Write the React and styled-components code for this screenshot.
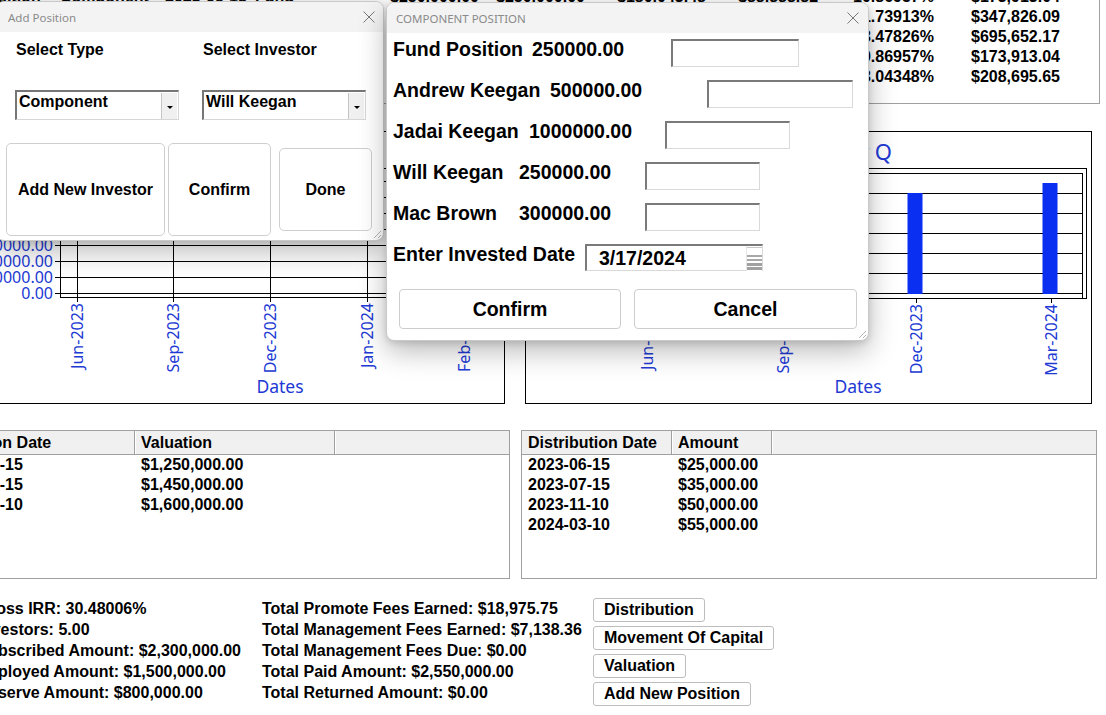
import React from 'react';
import styled, { createGlobalStyle } from 'styled-components';

const UI_FONT = `"Liberation Sans", Arial, sans-serif`;
const SEGOE = `"Noto Sans", "Open Sans", sans-serif`;
const BLUE = '#2139d4';

const GlobalStyle = createGlobalStyle`
  html, body { margin: 0; padding: 0; background: #fff; }
  body { overflow: hidden; font-family: ${UI_FONT}; color: #000; }
  * { box-sizing: border-box; }
`;

const Screen = styled.div`
  position: relative; width: 1106px; height: 715px; overflow: hidden; background: #fff;
`;

const Main = styled.div`
  margin-left: -66px; width: 1166px;
  display: flex; flex-direction: column;
  font: bold 16px ${UI_FONT};
`;

/* ---------- investors list at the top ---------- */
const TopTable = styled.div`
  margin-top: -13px; height: 117px; width: 1166px;
  border-right: 1px solid #a0a0a0; border-bottom: 1px solid #a0a0a0;
`;

const TopRow = styled.div`
  display: grid;
  grid-template-columns: 126px 105px 90px 135px 106px 121px 121px 115px 118px 1fr;
  height: 20px; line-height: 20px; white-space: nowrap;
`;

const Cell = styled.div`
  overflow: hidden; padding-left: ${p => p.$pad || 0}px;
`;

/* ---------- charts ---------- */
const ChartsRow = styled.div`
  display: flex; gap: 20px; margin-top: 27px;
`;

const ChartPanel = styled.div`
  width: ${p => p.$w}px; height: 273px;
  border: 1px solid #000; background: #fff;
  svg { display: block; font-weight: normal; }
`;

/* ---------- list views ---------- */
const TablesRow = styled.div`
  display: flex; gap: 11px; margin-top: 26px;
`;

const ListView = styled.div`
  width: 576px; height: 149px; border: 1px solid #a0a0a0; background: #fff; overflow: hidden;
`;

const HeaderRow = styled.div`
  display: grid; grid-template-columns: ${p => p.$cols};
  height: 24px; background: #f0f0f0; border-bottom: 1px solid #a0a0a0;
`;

const HeaderCell = styled.div`
  line-height: 23px; padding-left: 6px; white-space: nowrap; overflow: hidden;
  border-right: 1px solid #a0a0a0;
  & + & { border-left: 1px solid #fff; padding-left: 5px; }
  &:last-child { border-right: none; }
`;

const BodyRow = styled.div`
  display: grid; grid-template-columns: ${p => p.$cols};
  height: 20px; line-height: 20px; white-space: nowrap;
`;

/* ---------- stats + buttons ---------- */
const StatsRow = styled.div`
  display: flex; margin-top: 19px; padding-left: 2px;
`;

const StatsCol = styled.div`
  width: ${p => p.$w}px; display: flex; flex-direction: column; white-space: nowrap;
`;

const StatLine = styled.div`
  height: 21px; line-height: 21px;
`;

const ButtonsCol = styled.div`
  display: flex; flex-direction: column; align-items: flex-start; gap: 4px;
`;

const SmallButton = styled.button`
  height: 24px; padding: 0 10px; border: 1px solid #bdbdbd; border-radius: 3px;
  background: #fff; font: bold 16px ${UI_FONT}; line-height: 22px; color: #000;
`;

/* ---------- dialogs ---------- */
const Dialog = styled.div`
  position: absolute; left: ${p => p.$x}px; top: ${p => p.$y}px;
  width: ${p => p.$w}px; height: ${p => p.$h}px;
  background: #fff; border: 1px solid #c9c9c9; border-radius: 8px; overflow: hidden;
  box-shadow: 0 10px 28px rgba(0, 0, 0, 0.28), 0 2px 6px rgba(0, 0, 0, 0.12);
  display: flex; flex-direction: column;
`;

const TitleBar = styled.div`
  height: ${p => p.$h}px; flex: none; background: #f3f3f3;
  display: flex; align-items: center; justify-content: space-between;
  padding: 0 ${p => p.$right}px 0 ${p => p.$left}px;
  font: 11.5px ${SEGOE}; color: #8a8a8a;
`;

const Grip = styled.svg`
  position: absolute; right: 1px; bottom: 1px;
`;

const AddBody = styled.div`
  padding: 9px 0 0 9px; display: flex; flex-direction: column;
`;

const FieldsRow = styled.div`
  display: flex; gap: 23px; margin-left: 9px;
`;

const Field = styled.div`
  display: flex; flex-direction: column; gap: 29px;
`;

const FieldLabel = styled.div`
  height: 20px; line-height: 20px; padding-left: 1px; font: bold 16px ${UI_FONT};
`;

const Combo = styled.div`
  width: 164px; height: 30px; background: #fff;
  border-style: solid; border-width: 2px 1px 1px 2px;
  border-color: #767676 #d6d6d6 #d6d6d6 #767676;
  padding-left: 2px; display: flex; align-items: flex-start;
  font: bold 16px ${UI_FONT}; line-height: 20px;
`;

const ComboText = styled.span`
  flex: 1;
`;

const ComboButton = styled.span`
  width: 16px; height: 26px; margin: 1px 1px 0 0; background: #f0f0f0;
  border-left: 1px solid #c4c4c4;
  display: flex; align-items: center; justify-content: center;
  &::after {
    content: ''; margin-top: 3px;
    border-left: 3px solid transparent; border-right: 3px solid transparent; border-top: 3px solid #000;
  }
`;

const BigButtonsRow = styled.div`
  display: flex; align-items: center; margin-top: 23px;
`;

const BigButton = styled.button`
  width: ${p => p.$w}px; height: ${p => p.$h}px; margin-left: ${p => p.$gap || 0}px;
  border: 1px solid #cfcfcf; border-radius: 5px; background: #fff;
  font: bold 16px ${UI_FONT}; color: #000; padding: 0;
`;

const PosBody = styled.div`
  padding: 4px 0 0 6px; display: flex; flex-direction: column;
  font: bold 19.5px ${UI_FONT};
`;

const PosRow = styled.div`
  display: flex; align-items: flex-start; height: 41px; line-height: 24px; white-space: nowrap;
`;

const PosText = styled.div`
  width: ${p => p.$w}px; flex: none;
`;

const Entry = styled.div`
  width: ${p => p.$w}px; height: ${p => p.$h || 28}px; margin-top: 2px; flex: none; background: #fff;
  border-style: solid; border-width: 2px 1px 1px 2px;
  border-color: #7a7a7a #d9d9d9 #d9d9d9 #7a7a7a;
  display: flex; align-items: center;
`;

const DateText = styled.span`
  flex: 1; padding-left: 12px; line-height: 24px;
`;

const PosButtons = styled.div`
  display: flex; gap: 13px; margin-top: 6px; padding-left: 6px;
`;

const PosButton = styled.button`
  width: ${p => p.$w}px; height: 40px; border: 1px solid #cdcdcd; border-radius: 4px;
  background: #fff; font: bold 19.5px ${UI_FONT}; color: #000; padding: 0;
`;

/* ---------- data ---------- */
const topRows = [
  ['Fund Position', 'Component', '2023-06-15', 'Fund', '$250,000.00', '$250,000.00', '$180,043.48', '$88,888.82', '10.86957%', '$173,913.04'],
  ['Andrew Keegan', 'Investor', '2023-06-15', 'Class A', '$500,000.00', '$500,000.00', '$360,086.96', '$177,777.64', '21.73913%', '$347,826.09'],
  ['Jadai Keegan', 'Investor', '2023-06-15', 'Class A', '$1,000,000.00', '$1,000,000.00', '$720,173.91', '$355,555.28', '43.47826%', '$695,652.17'],
  ['Will Keegan', 'Investor', '2023-06-15', 'Class A', '$250,000.00', '$250,000.00', '$180,043.48', '$88,888.82', '10.86957%', '$173,913.04'],
  ['Mac Brown', 'Investor', '2023-06-15', 'Class A', '$300,000.00', '$300,000.00', '$216,052.17', '$106,666.58', '13.04348%', '$208,695.65'],
];

const valuations = [
  ['2023-06-15', '$1,250,000.00'],
  ['2023-09-15', '$1,450,000.00'],
  ['2024-01-10', '$1,600,000.00'],
];

const distributions = [
  ['2023-06-15', '$25,000.00'],
  ['2023-07-15', '$35,000.00'],
  ['2023-11-10', '$50,000.00'],
  ['2024-03-10', '$55,000.00'],
];

const statsLeft = [
  'Total Gross IRR: 30.48006%',
  'Total Investors: 5.00',
  'Total Subscribed Amount: $2,300,000.00',
  'Total Deployed Amount: $1,500,000.00',
  'Total Reserve Amount: $800,000.00',
];

const statsRight = [
  'Total Promote Fees Earned: $18,975.75',
  'Total Management Fees Earned: $7,138.36',
  'Total Management Fees Due: $0.00',
  'Total Paid Amount: $2,550,000.00',
  'Total Returned Amount: $0.00',
];

const positions = [
  { name: 'Fund Position', value: '250000.00', valueX: 531, inputX: 670, inputW: 128 },
  { name: 'Andrew Keegan', value: '500000.00', valueX: 549, inputX: 706, inputW: 146 },
  { name: 'Jadai Keegan', value: '1000000.00', valueX: 528, inputX: 664, inputW: 125 },
  { name: 'Will Keegan', value: '250000.00', valueX: 518, inputX: 644, inputW: 115 },
  { name: 'Mac Brown', value: '300000.00', valueX: 518, inputX: 644, inputW: 115 },
];

/* ---------- drawings ---------- */
const CloseIcon = () => (
  <svg width="12" height="12" viewBox="0 0 12 12">
    <path d="M0.5 0.5 L11.5 11.5 M11.5 0.5 L0.5 11.5" stroke="#777" strokeWidth="1" fill="none" />
  </svg>
);

const ResizeGrip = () => (
  <Grip width="11" height="11" viewBox="0 0 11 11">
    <path d="M10 3 L3 10 M10 7 L7 10" stroke="#b5b5b5" strokeWidth="1" fill="none" />
  </Grip>
);

const SpinIcon = () => (
  <svg width="16" height="25" viewBox="0 0 16 25" style={{ display: 'block' }}>
    <rect x="0" y="0" width="16" height="25" fill="#fff" />
    <line x1="0" y1="0" x2="0" y2="25" stroke="#d0d0d0" />
    <rect x="1" y="1" width="15" height="1" fill="#c8c8c8" />
    <rect x="1" y="9" width="15" height="2" fill="#a8a8a8" />
    <rect x="1" y="13" width="15" height="2" fill="#a8a8a8" />
    <rect x="1" y="17" width="15" height="3" fill="#a0a0a0" />
    <rect x="1" y="21" width="15" height="3" fill="#a0a0a0" />
  </svg>
);

const AxisLabel = ({ x, y, children }) => (
  <text transform={`translate(${x + 6}, ${y}) rotate(-90)`} textAnchor="end"
    fontFamily={SEGOE} fontSize="16" fontWeight="normal" fill={BLUE}>{children}</text>
);

const leftTicks = [
  { x: 77, label: 'Jun-2023' }, { x: 173, label: 'Sep-2023' }, { x: 270, label: 'Dec-2023' },
  { x: 367, label: 'Jan-2024' }, { x: 464, label: 'Feb-2024' },
];
const leftGrid = [
  { y: 293, label: '0.00' }, { y: 277, label: '200000.00' }, { y: 261, label: '400000.00' },
  { y: 245, label: '600000.00' }, { y: 229, label: '800000.00' }, { y: 213, label: '1000000.00' },
  { y: 197, label: '1200000.00' }, { y: 181, label: '1400000.00' },
];

const LeftChart = () => (
  <ChartPanel $w={571}>
    <svg width="569" height="271" viewBox="-65 132 569 271">
      <text x="215" y="160" textAnchor="middle" fontFamily={SEGOE} fontSize="22" fill={BLUE}>Valuation by Q</text>
      <rect x="60.5" y="168.5" width="432" height="129" fill="none" stroke="#000" />
      {leftGrid.map(g => (
        <g key={g.y}>
          <line x1="55" y1={g.y + 0.5} x2="492" y2={g.y + 0.5} stroke="#000" />
          <text x="53" y={g.y + 6} textAnchor="end" fontFamily={SEGOE} fontSize="16" fill={BLUE}>{g.label}</text>
        </g>
      ))}
      {leftTicks.map(t => (
        <g key={t.x}>
          <line x1={t.x + 0.5} y1="168" x2={t.x + 0.5} y2="302" stroke="#000" />
          <AxisLabel x={t.x} y={303}>{t.label}</AxisLabel>
        </g>
      ))}
      <text x="280" y="393" textAnchor="middle" fontFamily={SEGOE} fontSize="17.5" fill={BLUE}>Dates</text>
    </svg>
  </ChartPanel>
);

const rightTicks = [
  { x: 647, label: 'Jun-2023' }, { x: 783, label: 'Sep-2023' },
  { x: 916, label: 'Dec-2023', bar: 193 }, { x: 1051, label: 'Mar-2024', bar: 183 },
];

const RightChart = () => (
  <ChartPanel $w={567}>
    <svg width="565" height="271" viewBox="526 132 565 271">
      <text x="892" y="160" textAnchor="end" fontFamily={SEGOE} fontSize="22" fill={BLUE}>Distribution by Q</text>
      <rect x="585.5" y="168.5" width="501" height="130" fill="none" stroke="#000" />
      <line x1="585" y1="173.5" x2="1082" y2="173.5" stroke="#000" />
      <line x1="1082.5" y1="173" x2="1082.5" y2="298" stroke="#000" />
      {[193, 213, 233, 253, 273, 293].map((y, i) => (
        <g key={y}>
          <line x1="580" y1={y + 0.5} x2="1082" y2={y + 0.5} stroke="#000" />
          <text x="578" y={y + 6} textAnchor="end" fontFamily={SEGOE} fontSize="16" fill={BLUE}>
            {(10000 * (5 - i)).toFixed(2)}
          </text>
        </g>
      ))}
      {rightTicks.map(t => (
        <g key={t.x}>
          {t.bar && <rect x={t.x - 8.5} y={t.bar} width="15" height={294 - t.bar} fill="#0a2ff0" />}
          <line x1={t.x + 0.5} y1="298" x2={t.x + 0.5} y2="303" stroke="#000" />
          <AxisLabel x={t.x} y={304}>{t.label}</AxisLabel>
        </g>
      ))}
      <text x="858" y="393" textAnchor="middle" fontFamily={SEGOE} fontSize="17.5" fill={BLUE}>Dates</text>
    </svg>
  </ChartPanel>
);

/* ---------- page ---------- */
const LEFT_COLS = '200px 200px 1fr';
const RIGHT_COLS = '150px 100px 1fr';

const App = () => (
  <Screen>
    <GlobalStyle />
    <Main>
      <TopTable>
        {topRows.map((row, i) => (
          <TopRow key={i}>
            {row.map((c, j) => <Cell key={j}>{c}</Cell>)}
          </TopRow>
        ))}
      </TopTable>

      <ChartsRow>
        <LeftChart />
        <RightChart />
      </ChartsRow>

      <TablesRow>
        <ListView>
          <HeaderRow $cols={LEFT_COLS}>
            <HeaderCell>Valuation Date</HeaderCell>
            <HeaderCell>Valuation</HeaderCell>
            <HeaderCell />
          </HeaderRow>
          {valuations.map(r => (
            <BodyRow key={r[0]} $cols={LEFT_COLS}>
              <Cell $pad={6}>{r[0]}</Cell>
              <Cell $pad={6}>{r[1]}</Cell>
            </BodyRow>
          ))}
        </ListView>
        <ListView>
          <HeaderRow $cols={RIGHT_COLS}>
            <HeaderCell>Distribution Date</HeaderCell>
            <HeaderCell>Amount</HeaderCell>
            <HeaderCell />
          </HeaderRow>
          {distributions.map(r => (
            <BodyRow key={r[0]} $cols={RIGHT_COLS}>
              <Cell $pad={6}>{r[0]}</Cell>
              <Cell $pad={6}>{r[1]}</Cell>
            </BodyRow>
          ))}
        </ListView>
      </TablesRow>

      <StatsRow>
        <StatsCol $w={326}>
          {statsLeft.map(s => <StatLine key={s}>{s}</StatLine>)}
        </StatsCol>
        <StatsCol $w={331}>
          {statsRight.map(s => <StatLine key={s}>{s}</StatLine>)}
        </StatsCol>
        <ButtonsCol>
          <SmallButton>Distribution</SmallButton>
          <SmallButton>Movement Of Capital</SmallButton>
          <SmallButton>Valuation</SmallButton>
          <SmallButton>Add New Position</SmallButton>
        </ButtonsCol>
      </StatsRow>
    </Main>

    <Dialog $x={-4} $y={1} $w={388} $h={240}>
      <TitleBar $h={30} $left={11} $right={8}>
        <span>Add Position</span>
        <CloseIcon />
      </TitleBar>
      <AddBody>
        <FieldsRow>
          <Field>
            <FieldLabel>Select Type</FieldLabel>
            <Combo><ComboText>Component</ComboText><ComboButton /></Combo>
          </Field>
          <Field>
            <FieldLabel>Select Investor</FieldLabel>
            <Combo><ComboText>Will Keegan</ComboText><ComboButton /></Combo>
          </Field>
        </FieldsRow>
        <BigButtonsRow>
          <BigButton $w={159} $h={93}>Add New Investor</BigButton>
          <BigButton $w={103} $h={93} $gap={3}>Confirm</BigButton>
          <BigButton $w={93} $h={83} $gap={8}>Done</BigButton>
        </BigButtonsRow>
      </AddBody>
      <ResizeGrip />
    </Dialog>

    <Dialog $x={386} $y={2} $w={483} $h={339}>
      <TitleBar $h={30} $left={9} $right={9}>
        <span>COMPONENT POSITION</span>
        <CloseIcon />
      </TitleBar>
      <PosBody>
        {positions.map(p => (
          <PosRow key={p.name}>
            <PosText $w={p.valueX - 392}>{p.name}</PosText>
            <PosText $w={p.inputX - p.valueX}>{p.value}</PosText>
            <Entry $w={p.inputW} />
          </PosRow>
        ))}
        <PosRow>
          <PosText $w={192}>Enter Invested Date</PosText>
          <Entry $w={178} $h={27}>
            <DateText>3/17/2024</DateText>
            <SpinIcon />
          </Entry>
        </PosRow>
        <PosButtons>
          <PosButton $w={222}>Confirm</PosButton>
          <PosButton $w={223}>Cancel</PosButton>
        </PosButtons>
      </PosBody>
      <ResizeGrip />
    </Dialog>
  </Screen>
);

export default App;
